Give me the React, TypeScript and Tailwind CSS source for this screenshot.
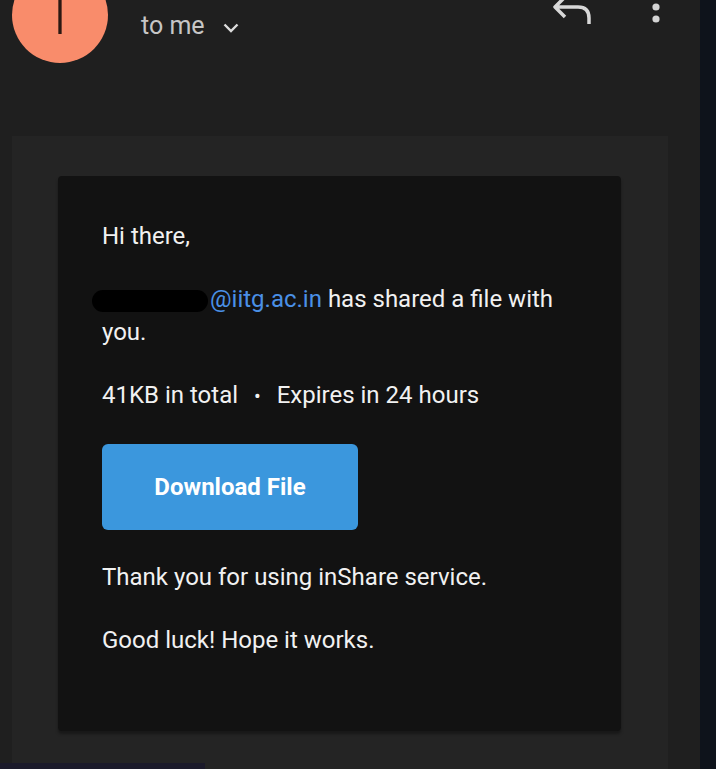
import React from 'react';

const ReplyIcon: React.FC = () => (
  <svg width="44" height="32" viewBox="0 0 44 32" className="-mt-2 shrink-0">
    <path
      d="M15 5 L5 15 L15 25 M5 15 L28 15 Q39 15 39 26 L39 32"
      fill="none"
      stroke="#d8d8d8"
      strokeWidth="3.5"
      strokeLinejoin="round"
    />
  </svg>
);

const MoreIcon: React.FC = () => (
  <svg width="10" height="36" viewBox="0 0 10 36" className="-mt-3 shrink-0">
    <circle cx="5" cy="7" r="3.6" fill="#d4d4d4" />
    <circle cx="5" cy="19" r="3.6" fill="#d4d4d4" />
    <circle cx="5" cy="31" r="3.6" fill="#d4d4d4" />
  </svg>
);

const Chevron: React.FC = () => (
  <svg width="16" height="10" viewBox="0 0 16 10" className="ml-[18px] mt-[4px]">
    <path d="M1.5 1.5 L8 8 L14.5 1.5" fill="none" stroke="#dcdcdc" strokeWidth="2.4" />
  </svg>
);

export default function App() {
  return (
    <div
      className="relative flex w-[716px] h-[769px] overflow-hidden bg-[#1f1f1f]"
      style={{ fontFamily: 'Roboto, "Liberation Sans", sans-serif' }}
    >
      <div className="flex flex-col w-[700px] h-full">
        {/* header */}
        <div className="flex items-start h-[136px] shrink-0">
          <div className="ml-3 -mt-[33px] w-24 h-24 shrink-0 rounded-full bg-[#f98c6b] flex items-center justify-center overflow-hidden">
            <span className="text-[#2a1812] text-[56px] leading-none font-light -mt-[1px]">T</span>
          </div>
          <div className="ml-[33px] mt-[10px] flex items-center h-8">
            <span className="text-[25px] leading-8 text-[#c6c6c6]">to me</span>
            <Chevron />
          </div>
          <div className="flex-1" />
          <ReplyIcon />
          <div className="ml-[57px] mr-[39px]">
            <MoreIcon />
          </div>
        </div>

        {/* message body */}
        <div className="ml-3 w-[656px] flex-1 bg-[#242424] pt-10">
          <div className="ml-[46px] w-[563px] rounded-[4px] bg-[#121212] px-11 pt-11 pb-[74px] text-[24px] leading-[33px] text-[#f1f1f1] shadow-[0_3px_3px_rgba(0,0,0,0.35)]">
            <p>Hi there,</p>
            <p className="mt-[30px]">
              <span className="inline-block align-middle -ml-[10px] mr-[2px] w-[116px] h-[22px] rounded-full bg-black" />
              <span className="text-[#4a90e6]">@iitg.ac.in</span> has shared a file with you.
            </p>
            <p className="mt-[30px]">
              41KB in total <span className="mx-[10px] text-[20px]">•</span> Expires in 24 hours
            </p>
            <div className="mt-[31px] w-[256px] h-[86px] rounded-[6px] bg-[#3b97dd] flex items-center justify-center">
              <span className="font-bold text-white text-[24px]">Download File</span>
            </div>
            <p className="mt-[31px]">Thank you for using inShare service.</p>
            <p className="mt-[30px]">Good luck! Hope it works.</p>
          </div>
        </div>
      </div>
      <div className="w-4 h-full bg-[#0e131b]" />
      <div className="absolute bottom-0 left-0 w-[205px] h-[6px] bg-[#1b1a2a]" />
    </div>
  );
}
